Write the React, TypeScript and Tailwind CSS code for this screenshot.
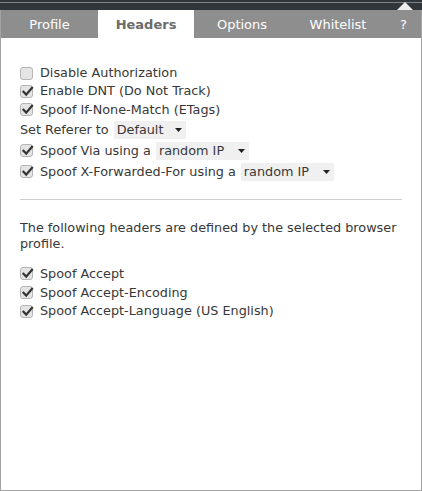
import React from "react";

function Box({ checked }: { checked: boolean }) {
  return (
    <span className="relative inline-flex h-[13px] w-[13px] shrink-0 items-center justify-center rounded-[3px] border border-[#b5b5b5] bg-[#e4e4e4]">
      {checked && (
        <svg viewBox="0 0 13 13" className="absolute left-[0px] top-[-1px] h-[13px] w-[13px]">
          <path d="M2.5 6.8 L5.2 9.6 L11 2.8" fill="none" stroke="#333" strokeWidth="2.2" strokeLinecap="square" />
        </svg>
      )}
    </span>
  );
}

function Check({ checked, label, h }: { checked: boolean; label: string; h: string }) {
  return (
    <label className={`flex items-center gap-[7px] ${h}`}>
      <Box checked={checked} />
      <span>{label}</span>
    </label>
  );
}

function Select({ value, width }: { value: string; width: string }) {
  return (
    <span className={`ml-[5px] inline-flex h-[18px] items-center justify-between bg-[#f0f0f0] pl-[3px] pr-[4px] ${width}`}>
      <span>{value}</span>
      <svg viewBox="0 0 7 4" className="h-[4px] w-[7px]">
        <path d="M0 0 H7 L3.5 4 Z" fill="#222" />
      </svg>
    </span>
  );
}

const tabs = ["Profile", "Headers", "Options", "Whitelist"];

export default function App() {
  return (
    <div className="flex h-[491px] w-[422px] flex-col bg-[#2f3538] text-[#383838]" style={{ fontFamily: '"DejaVu Sans", sans-serif' }}>
      <div className="relative h-[10px] shrink-0">
        <div className="mt-[2px] h-px bg-[#7d8386]" />
        <svg viewBox="0 0 16 8" className="absolute left-[397px] top-[2px] h-[8px] w-[16px]">
          <path d="M0 8 L8 0 L16 8 Z" fill="#ececec" />
        </svg>
      </div>
      <div className="flex flex-1 flex-col border border-t-0 border-[#a3a3a3] bg-white">
        <div className="flex h-[28px] shrink-0 bg-[#8e8e8e] pt-px text-[13px]">
          {tabs.map((t) => (
            <div
              key={t}
              className={
                t === "Headers"
                  ? "-mt-px flex w-[96px] items-center justify-center bg-white pt-px font-bold text-[#6b6b6b]"
                  : "flex w-[96px] items-center justify-center text-white first:w-[97px]"
              }
            >
              {t}
            </div>
          ))}
          <div className="flex flex-1 items-center justify-center text-white">?</div>
        </div>
        <div className="flex flex-col pl-[19px] pr-[19px] pt-[26px] text-[12.8px]">
          <Check checked={false} label="Disable Authorization" h="h-[18px]" />
          <Check checked label="Enable DNT (Do Not Track)" h="h-[18px]" />
          <Check checked label="Spoof If-None-Match (ETags)" h="h-[19px]" />
          <div className="flex h-[21px] items-center">
            <span>Set Referer to</span>
            <Select value="Default" width="w-[72px]" />
          </div>
          <div className="flex h-[21px] items-center gap-[7px]">
            <Box checked />
            <span className="flex items-center">
              Spoof Via using a<Select value="random IP" width="w-[93px]" />
            </span>
          </div>
          <div className="flex h-[21px] items-center gap-[7px]">
            <Box checked />
            <span className="flex items-center">
              Spoof X-Forwarded-For using a<Select value="random IP" width="w-[93px]" />
            </span>
          </div>
          <div className="mt-[17px] h-px bg-[#cfcfcf]" />
          <p className="mt-[20px] leading-[16px]">The following headers are defined by the selected browser profile.</p>
          <div className="mt-[12px] flex flex-col">
            <Check checked label="Spoof Accept" h="h-[19px]" />
            <Check checked label="Spoof Accept-Encoding" h="h-[19px]" />
            <Check checked label="Spoof Accept-Language (US English)" h="h-[18px]" />
          </div>
        </div>
      </div>
    </div>
  );
}
